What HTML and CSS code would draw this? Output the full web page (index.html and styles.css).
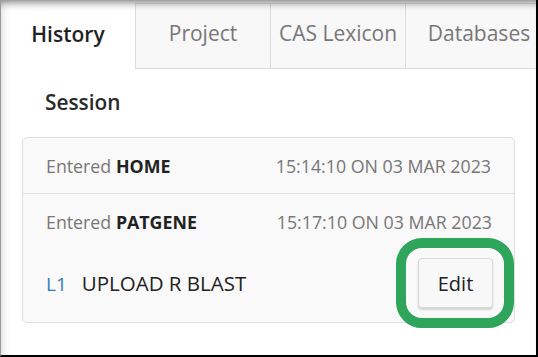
FILE: index.html
```html
<!DOCTYPE html>
<html>
<head>
<meta charset="utf-8">
<link rel="stylesheet" href="styles.css">
</head>
<body>
<div class="frame">
  <div class="tabs">
    <div class="tab active">History</div>
    <div class="tab">Project</div>
    <div class="tab">CAS Lexicon</div>
    <div class="tab last">Databases</div>
  </div>
  <div class="content">
    <div class="heading">Session</div>
    <div class="card">
      <div class="row first">
        <div class="entry"><span class="muted">Entered</span> <b>HOME</b></div>
        <div class="time">15:14:10 ON 03 MAR 2023</div>
      </div>
      <div class="row second">
        <div class="line">
          <div class="entry"><span class="muted">Entered</span> <b>PATGENE</b></div>
          <div class="time">15:17:10 ON 03 MAR 2023</div>
        </div>
        <div class="line cmd">
          <div class="command"><span class="lnum">L1</span><span class="ctext">UPLOAD R BLAST</span></div>
          <div class="btnwrap"><button class="btn">Edit</button></div>
        </div>
      </div>
    </div>
  </div>
</div>
</body>
</html>
```
FILE: styles.css
```css
html, body {
  margin: 0;
  padding: 0;
  background: #fff;
}
.frame {
  position: relative;
  width: 538px;
  height: 357px;
  box-sizing: border-box;
  border-left: 1px solid #9a9a9a;
  border-right: 2px solid #000;
  border-bottom: 2px solid #000;
  overflow: hidden;
  background: #fff;
  font-family: "Open Sans", "Noto Sans", sans-serif;
  color: #333;
}
.frame::after {
  content: "";
  position: absolute;
  inset: 0;
  pointer-events: none;
  box-shadow: inset 0 9px 8px -7px rgba(0,0,0,0.55), inset 9px 0 8px -7px rgba(0,0,0,0.12);
}
.tabs {
  display: flex;
  height: 69px;
  white-space: nowrap;
}
.tab {
  flex: 0 0 135px;
  box-sizing: border-box;
  margin-top: 3px;
  display: flex;
  align-items: center;
  justify-content: center;
  padding-bottom: 6px;
  font-size: 21px;
  color: #777;
  background: #f8f8f8;
  border-top: 1px solid #e0e0e0;
  border-left: 1px solid #dcdcdc;
  border-bottom: 1px solid #dcdcdc;
}
.tab.active {
  flex-basis: 134px;
  margin-top: 0;
  padding-bottom: 2px;
  background: #fff;
  border: none;
  color: #222;
  font-weight: 600;
}
.tab.last {
  flex-basis: 150px;
  padding-right: 3px;
}
.content {
  padding: 0 21px 0 21px;
}
.heading {
  height: 68px;
  display: flex;
  align-items: center;
  padding-left: 23px;
  padding-bottom: 2px;
  box-sizing: border-box;
  font-size: 20.8px;
  font-weight: 600;
  color: #2a2a2a;
}
.card {
  border: 1px solid #dedede;
  border-radius: 5px;
  background: #f9f9f9;
}
.row {
  padding: 0 23px;
}
.row.first {
  height: 55px;
  display: flex;
  align-items: center;
  justify-content: space-between;
  border-bottom: 1px solid #e2e2e2;
}
.row.second {
  padding: 16px 21px 14px 23px;
}
.line {
  display: flex;
  align-items: center;
  justify-content: space-between;
  height: 24px;
  padding-right: 1px;
}
.line.cmd {
  height: 50px;
  margin-top: 24px;
  padding-right: 0;
}
.entry {
  font-size: 17.8px;
  color: #222;
}
.muted {
  color: #777;
}
.entry b {
  font-weight: 700;
  color: #222;
}
.time {
  font-size: 17.8px;
  color: #777;
}
.command {
  font-size: 20.5px;
  color: #222;
}
.lnum {
  font-size: 19px;
  color: #3479c0;
  margin-right: 15px;
}
.btnwrap {
  position: relative;
}
.btnwrap::before {
  content: "";
  position: absolute;
  top: -20px;
  bottom: -20px;
  left: -22px;
  right: -21px;
  border: 10px solid #2ea55b;
  border-radius: 26px;
  pointer-events: none;
}
.btn {
  display: block;
  width: 75px;
  height: 50px;
  box-sizing: border-box;
  border: 1px solid #dadada;
  border-radius: 4px;
  background: #f8f8f8;
  box-shadow: 0 2px 2px rgba(0,0,0,0.15);
  font-family: "Open Sans", "Noto Sans", sans-serif;
  font-size: 20px;
  color: #222;
  padding: 0;
}
```
